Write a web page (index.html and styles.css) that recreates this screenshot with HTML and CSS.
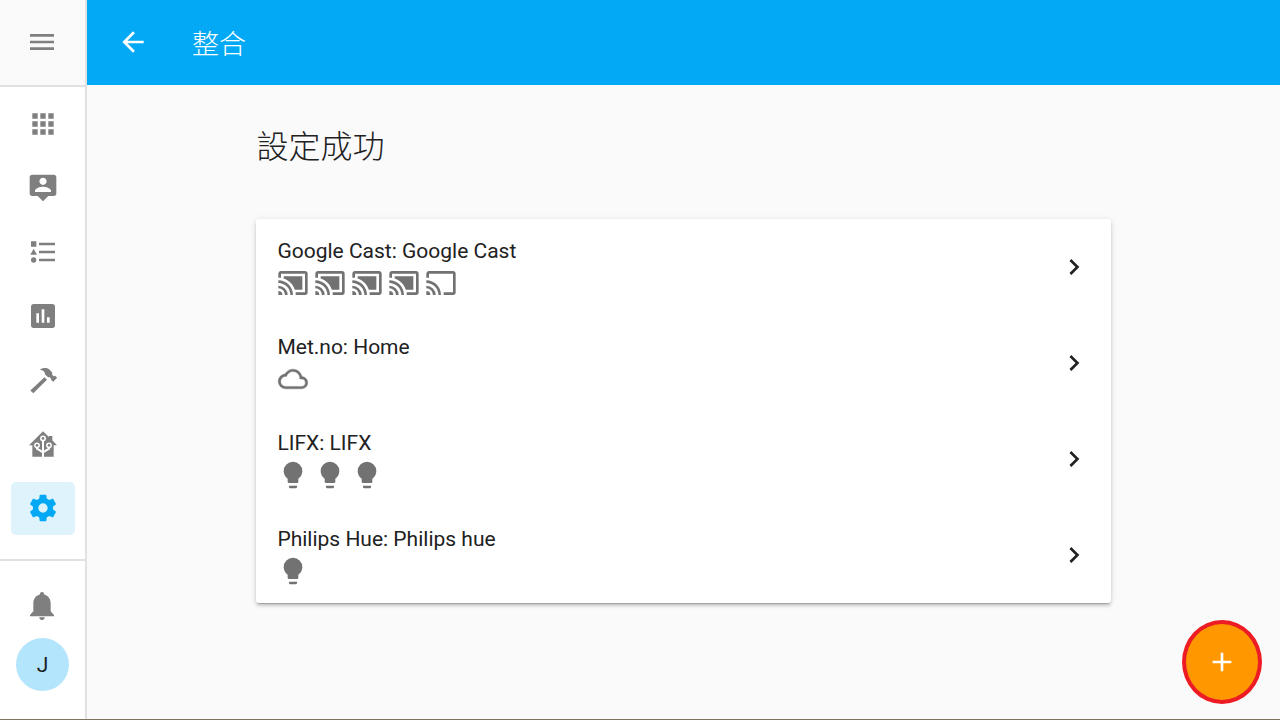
FILE: index.html
```html
<!DOCTYPE html>
<html lang="zh-Hant">
<head>
	<meta charset="UTF-8">
	<title>整合</title>
	<link rel="stylesheet" href="styles.css">
</head>
<body>
	<!-- icons -->
	<svg class="sprite" aria-hidden="true">
		<symbol id="cast-on" viewBox="0 0 24 24"><path d="M21,3H3C1.9,3 1,3.9 1,5V8H3V5H21V19H14V21H21A2,2 0 0,0 23,19V5C23,3.89 22.1,3 21,3M1,10V12A9,9 0 0,1 10,21H12C12,14.92 7.07,10 1,10M19,7H5V8.63C8.96,9.91 12.09,13.04 13.37,17H19M1,14V16A5,5 0 0,1 6,21H8A7,7 0 0,0 1,14M1,18V21H4A3,3 0 0,0 1,18Z"/></symbol>
		<symbol id="cast" viewBox="0 0 24 24"><path d="M21,3H3C1.9,3 1,3.9 1,5V8H3V5H21V19H14V21H21A2,2 0 0,0 23,19V5C23,3.89 22.1,3 21,3M1,10V12A9,9 0 0,1 10,21H12C12,14.92 7.07,10 1,10M1,14V16A5,5 0 0,1 6,21H8A7,7 0 0,0 1,14M1,18V21H4A3,3 0 0,0 1,18Z"/></symbol>
		<symbol id="bulb" viewBox="0 0 24 24"><path d="M12,2A7,7 0 0,0 5,9C5,11.38 6.19,13.47 8,14.74V17A1,1 0 0,0 9,18H15A1,1 0 0,0 16,17V14.74C17.81,13.47 19,11.38 19,9A7,7 0 0,0 12,2M9,21A1,1 0 0,0 10,22H14A1,1 0 0,0 15,21V20H9V21Z"/></symbol>
		<symbol id="cloud" viewBox="-1 -1 26 26"><path stroke="currentColor" stroke-width=".3" d="M19,18H6A4,4 0 0,1 2,14A4,4 0 0,1 6,10H6.71C7.37,7.69 9.5,6 12,6A5.5,5.5 0 0,1 17.5,11.5V12H19A3,3 0 0,1 22,15A3,3 0 0,1 19,18M19.35,10.03C18.67,6.59 15.64,4 12,4C9.11,4 6.6,5.64 5.35,8.03C2.34,8.36 0,10.9 0,14A6,6 0 0,0 6,20H19A5,5 0 0,0 24,15C24,12.36 21.95,10.22 19.35,10.03Z"/></symbol>
		<symbol id="chevron" viewBox="0 0 24 24"><path d="M8.59,16.58L13.17,12L8.59,7.41L10,6L16,12L10,18L8.59,16.58Z"/></symbol>
	</svg>

	<!-- sidebar -->
	<aside class="sidebar">
		<div class="menu">
			<button type="button" class="iconBtn" aria-label="選單">
				<svg class="icon" viewBox="0 0 24 24"><path d="M3,6H21V8H3V6M3,11H21V13H3V11M3,16H21V18H3V16Z"/></svg>
			</button>
		</div>
		<nav class="nav">
			<a href="#" aria-label="總覽"><svg class="icon" viewBox="0 0 24 24"><path d="M16,20H20V16H16M16,14H20V10H16M10,8H14V4H10M16,8H20V4H16M10,14H14V10H10M4,14H8V10H4M4,20H8V16H4M10,20H14V16H10M4,8H8V4H4Z"/></svg></a>
			<a href="#" aria-label="地圖"><svg class="icon" viewBox="0 0 24 24"><path d="M20,2H4A2,2 0 0,0 2,4V16A2,2 0 0,0 4,18H8L12,22L16,18H20A2,2 0 0,0 22,16V4A2,2 0 0,0 20,2M12,4.3C13.5,4.3 14.7,5.5 14.7,7C14.7,8.5 13.5,9.7 12,9.7C10.5,9.7 9.3,8.5 9.3,7C9.3,5.5 10.5,4.3 12,4.3M18,15H6V14.1C6,12.1 10,11 12,11C14,11 18,12.1 18,14.1V15Z"/></svg></a>
			<a href="#" aria-label="日誌"><svg class="icon" viewBox="0 0 24 24"><path d="M5,9.5L7.5,14H2.5L5,9.5M3,4H7V8H3V4M5,20A2,2 0 0,0 7,18A2,2 0 0,0 5,16A2,2 0 0,0 3,18A2,2 0 0,0 5,20M9,5V7H21V5H9M9,19H21V17H9V19M9,13H21V11H9V13Z"/></svg></a>
			<a href="#" aria-label="歷史"><svg class="icon" viewBox="0 0 24 24"><path d="M17,17H15V13H17M13,17H11V7H13M9,17H7V10H9M19,3H5C3.89,3 3,3.89 3,5V19A2,2 0 0,0 5,21H19A2,2 0 0,0 21,19V5C21,3.89 20.1,3 19,3Z"/></svg></a>
			<a href="#" aria-label="開發工具"><svg class="icon" viewBox="0 0 24 24"><path d="M13.1,10L15,11.9L4.7,21.9L2.5,19.8ZM9.6,4.3C11.6,2.6 14.8,2.6 16.6,4L18.9,6.4V8L20,9.1L21,8.8L22.6,10.4L19.7,13.4L18,11.8V10.9L17,10H15.8L13.6,7.8C13.6,5.9 12.2,4.7 9.6,4.3Z"/></svg></a>
			<a href="#" aria-label="Home Assistant"><svg class="icon" viewBox="0 0 24 24"><path d="M12,2.5L16.5,6.8V6H19V9.2L22.5,13H20V21.5H4V13H1.5Z"/><path class="tree" d="M12,22V8M12,18.3L7.5,15.5V13M12,18.3L16.5,15.5V13"/><g class="ring"><circle cx="12" cy="7.8" r="2.2"/><circle cx="7.5" cy="13" r="2.2"/><circle cx="16.5" cy="13" r="2.2"/></g><circle cx="12" cy="7.8" r="1"/><circle cx="7.5" cy="13" r="1"/><circle cx="16.5" cy="13" r="1"/></svg></a>
			<a href="#" class="active" aria-label="設定"><svg class="icon" viewBox="0 0 24 24"><path d="M12,15.5A3.5,3.5 0 0,1 8.5,12A3.5,3.5 0 0,1 12,8.5A3.5,3.5 0 0,1 15.5,12A3.5,3.5 0 0,1 12,15.5M19.43,12.97C19.47,12.65 19.5,12.33 19.5,12C19.5,11.67 19.47,11.34 19.43,11L21.54,9.37C21.73,9.22 21.78,8.95 21.66,8.73L19.66,5.27C19.54,5.05 19.27,4.96 19.05,5.05L16.56,6.05C16.04,5.66 15.5,5.32 14.87,5.07L14.5,2.42C14.46,2.18 14.25,2 14,2H10C9.75,2 9.54,2.18 9.5,2.42L9.13,5.07C8.5,5.32 7.96,5.66 7.44,6.05L4.95,5.05C4.73,4.96 4.46,5.05 4.34,5.27L2.34,8.73C2.21,8.95 2.27,9.22 2.46,9.37L4.57,11C4.53,11.34 4.5,11.67 4.5,12C4.5,12.33 4.53,12.65 4.57,12.97L2.46,14.63C2.27,14.78 2.21,15.05 2.34,15.27L4.34,18.73C4.46,18.95 4.73,19.03 4.95,18.95L7.44,17.94C7.96,18.34 8.5,18.68 9.13,18.93L9.5,21.58C9.54,21.82 9.75,22 10,22H14C14.25,22 14.46,21.82 14.5,21.58L14.87,18.93C15.5,18.67 16.04,18.34 16.56,17.94L19.05,18.95C19.27,19.03 19.54,18.95 19.66,18.73L21.66,15.27C21.78,15.05 21.73,14.78 21.54,14.63L19.43,12.97Z"/></svg></a>
		</nav>
		<div class="user">
			<button type="button" class="iconBtn" aria-label="通知">
				<svg class="icon" viewBox="0 0 24 24"><path d="M14,20.5A2,2 0 0,1 12,22.5A2,2 0 0,1 10,20.5H14M12,1.5A1.6,1.6 0 0,1 13.6,3V3.4C16.7,4.2 18.5,6.7 18.5,10V16L21,18.7V19.7H3V18.7L5.5,16V10C5.5,6.7 7.3,4.2 10.4,3.4V3A1.6,1.6 0 0,1 12,1.5Z"/></svg>
			</button>
			<a href="#" class="avatar">J</a>
		</div>
	</aside>

	<!-- content -->
	<div class="page">
		<header class="toolbar">
			<button type="button" class="iconBtn" aria-label="返回">
				<svg class="icon" viewBox="0 0 24 24"><path d="M20,11V13H7.8L13.4,18.6L12,20L4,12L12,4L13.4,5.4L7.8,11H20Z"/></svg>
			</button>
			<h1>整合</h1>
		</header>
		<main class="main">
			<h2>設定成功</h2>
			<ul class="card">
				<li><a href="#" class="entry">
					<div class="info">
						<span class="name">Google Cast: Google Cast</span>
						<div class="devices">
							<svg class="icon"><use href="#cast-on"/></svg>
							<svg class="icon"><use href="#cast-on"/></svg>
							<svg class="icon"><use href="#cast-on"/></svg>
							<svg class="icon"><use href="#cast-on"/></svg>
							<svg class="icon"><use href="#cast"/></svg>
						</div>
					</div>
					<svg class="icon next"><use href="#chevron"/></svg>
				</a></li>
				<li><a href="#" class="entry">
					<div class="info">
						<span class="name">Met.no: Home</span>
						<div class="devices">
							<svg class="icon"><use href="#cloud"/></svg>
						</div>
					</div>
					<svg class="icon next"><use href="#chevron"/></svg>
				</a></li>
				<li><a href="#" class="entry">
					<div class="info">
						<span class="name">LIFX: LIFX</span>
						<div class="devices">
							<svg class="icon"><use href="#bulb"/></svg>
							<svg class="icon"><use href="#bulb"/></svg>
							<svg class="icon"><use href="#bulb"/></svg>
						</div>
					</div>
					<svg class="icon next"><use href="#chevron"/></svg>
				</a></li>
				<li><a href="#" class="entry">
					<div class="info">
						<span class="name">Philips Hue: Philips hue</span>
						<div class="devices">
							<svg class="icon"><use href="#bulb"/></svg>
						</div>
					</div>
					<svg class="icon next"><use href="#chevron"/></svg>
				</a></li>
			</ul>
		</main>
	</div>

	<button type="button" class="fab" aria-label="新增整合">
		<svg class="icon" viewBox="0 0 24 24"><path d="M19,13H13V19H11V13H5V11H11V5H13V11H19V13Z"/></svg>
	</button>
</body>
</html>
```
FILE: styles.css
```css
*{
	margin:0;
	padding:0;
	box-sizing:border-box;
}
body{
	display:flex;
	min-height:100vh;
	background:#fafafa;
	color:#212121;
	font-family:Roboto,"Noto Sans CJK TC",sans-serif;
	border-bottom:1px solid #7b7460;
}
ul{
	list-style:none;
}
a{
	color:inherit;
	text-decoration:none;
}
button{
	border:0;
	background:none;
	color:inherit;
	cursor:pointer;
}
.sprite{
	display:none;
}
.icon{
	display:block;
	width:32px;
	height:32px;
	fill:currentColor;
}
.iconBtn{
	display:flex;
	align-items:center;
	justify-content:center;
	width:53px;
	height:53px;
	padding:0 1px 1px 0;
}

/* sidebar */
.sidebar{
	flex:none;
	display:flex;
	flex-direction:column;
	width:87px;
	background:#fff;
	border-right:2px solid #e1e1e1;
	color:#7f7f7f;
}
.menu{
	display:flex;
	align-items:center;
	justify-content:center;
	height:87px;
	background:#fafafa;
	border-bottom:2px solid #e1e1e1;
}
.nav{
	flex:1;
	display:flex;
	flex-direction:column;
	gap:11px;
	padding:11px 10px 0 11px;
}
.nav a{
	display:flex;
	align-items:center;
	justify-content:center;
	height:53px;
	padding:0 1px 1px 0;
	border-radius:5px;
}
.nav .active{
	background:#dff3fd;
	color:#03a9f4;
}
.tree{
	fill:none;
	stroke:#fff;
	stroke-width:1.5;
}
.ring{
	fill:#fff;
}
.user{
	display:flex;
	flex-direction:column;
	align-items:center;
	gap:5px;
	padding:19px 0 28px;
	border-top:2px solid #e1e1e1;
}
.avatar{
	width:53px;
	height:53px;
	border-radius:50%;
	background:#b3e5fc;
	color:#212121;
	font-size:21px;
	line-height:54px;
	text-align:center;
}

/* content */
.page{
	flex:1;
}
.toolbar{
	display:flex;
	align-items:center;
	gap:32px;
	height:85px;
	padding:0 20px;
	background:#03a9f4;
	color:#fff;
}
.toolbar h1{
	font-size:27px;
	font-weight:300;
}
.main{
	width:71.6%;
	max-width:1387px;
	margin:0 auto;
	padding-top:38px;
}
.main h2{
	margin-bottom:48px;
	font-size:32px;
	font-weight:300;
	line-height:48px;
}
.card{
	background:#fff;
	border-radius:3px;
	box-shadow:0 3px 3px rgba(0,0,0,.14),0 1px 6px rgba(0,0,0,.12),0 3px 1px -2px rgba(0,0,0,.2);
}
.entry{
	display:flex;
	align-items:center;
	justify-content:space-between;
	height:96px;
	padding:0 21px;
}
.name{
	display:block;
	font-size:21px;
	line-height:32px;
}
.devices{
	display:flex;
	gap:5px;
	color:#727272;
}

/* add button */
.fab{
	position:fixed;
	right:18px;
	bottom:16px;
	display:flex;
	align-items:center;
	justify-content:center;
	width:80px;
	height:84px;
	border:4px solid #ed1c24;
	border-radius:50%;
	background:#ff9800;
	color:#fff;
}
```
